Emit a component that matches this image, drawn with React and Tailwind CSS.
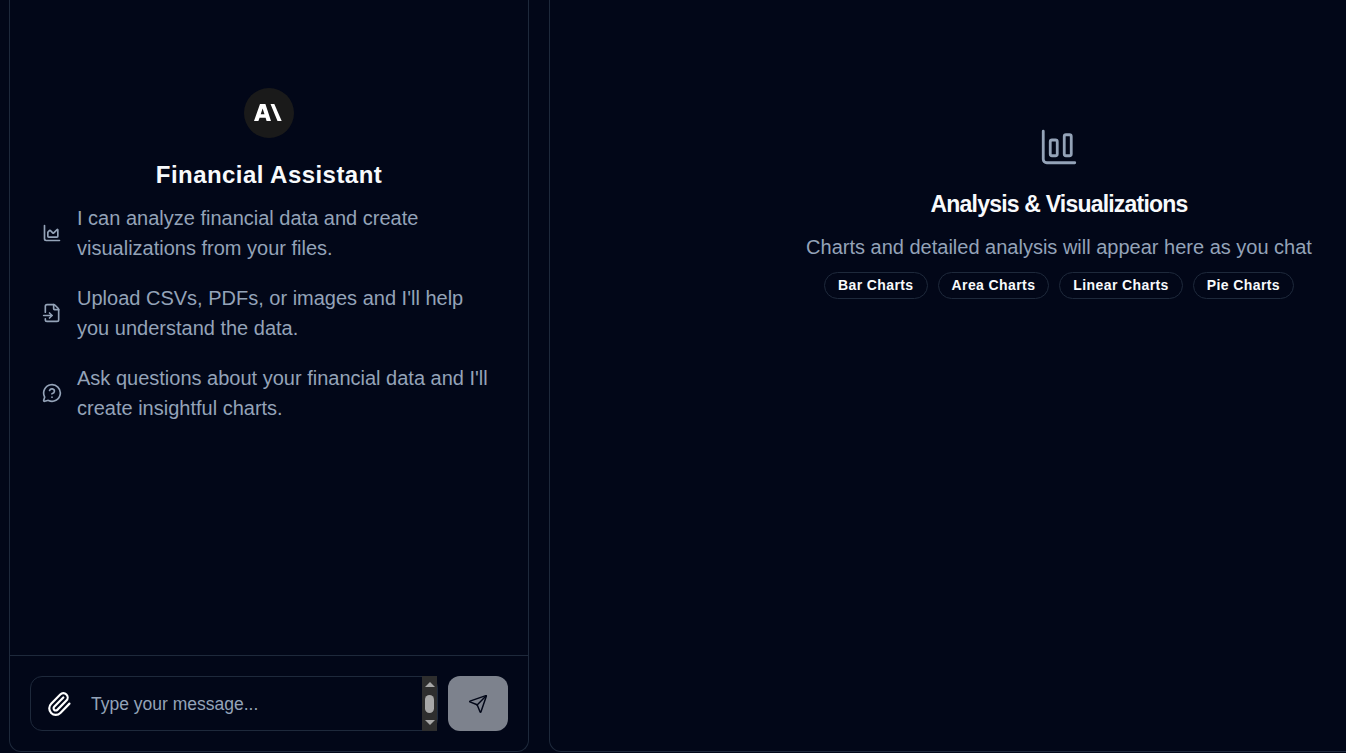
import React from 'react';
import { ChartArea, ChartColumnBig, FileInput, MessageCircleQuestion, Paperclip, Send } from 'lucide-react';

const TIPS = [
  { icon: ChartArea, text: 'I can analyze financial data and create visualizations from your files.' },
  { icon: FileInput, text: "Upload CSVs, PDFs, or images and I'll help you understand the data." },
  { icon: MessageCircleQuestion, text: "Ask questions about your financial data and I'll create insightful charts." },
];

const CHART_TYPES = ['Bar Charts', 'Area Charts', 'Linear Charts', 'Pie Charts'];

const ChatPanel = () => (
  <div className="w-[520px] shrink-0 flex flex-col border-x border-b border-[#1e293b] rounded-b-xl">
    <div className="flex-1 flex flex-col items-center pt-[88px] px-[31px]">
      <div className="w-[50px] h-[50px] rounded-full bg-[#1a1a1a] flex items-center justify-center">
        <svg width="30" height="22" viewBox="0 0 30 22" fill="#ffffff">
          <path d="M6 2h5.4l5.6 17h-4.4l-1-3.3H5.6L4.4 19H0zM6.7 12.2h3.8L8.6 6.4z" fillRule="evenodd" />
          <path d="M16.5 2h3.8l7.4 17h-4.2z" />
        </svg>
      </div>
      <h2 className="mt-[22px] text-[24px] leading-[30px] font-bold tracking-[0.45px] text-[#f8fafc]">Financial Assistant</h2>
      <div className="w-full mt-[13px] flex flex-col gap-[20px]">
        {TIPS.map(({ icon: Icon, text }) => (
          <div key={text} className="flex items-center gap-[15px]">
            <Icon className="ml-[1px] w-[20px] h-[20px] shrink-0 text-[#94a3b8]" strokeWidth={2} />
            <p className="text-[20px] leading-[30px] text-[#94a3b8]">{text}</p>
          </div>
        ))}
      </div>
    </div>
    <div className="border-t border-[#1e293b] p-[20px] flex items-center gap-[10px]">
      <div className="flex-1 h-[55px] flex items-center border border-[#1e293b] rounded-xl">
        <Paperclip className="ml-[15px] w-[26px] h-[26px] shrink-0 text-white" strokeWidth={2} />
        <textarea
          rows={1}
          placeholder="Type your message..."
          className="ml-[19px] flex-1 min-w-0 bg-transparent text-[17.5px] leading-[28px] resize-none outline-none text-[#f8fafc] placeholder:text-[#94a3b8]"
        />
        <div className="w-[15px] h-[55px] shrink-0 bg-[#2e2e2e] flex flex-col items-center justify-between py-[6px]">
          <div className="w-0 h-0 border-x-[5px] border-x-transparent border-b-[5px] border-b-[#a8a8a8]" />
          <div className="w-[9px] h-[18px] rounded-full bg-[#a8a8a8]" />
          <div className="w-0 h-0 border-x-[5px] border-x-transparent border-t-[5px] border-t-[#a8a8a8]" />
        </div>
      </div>
      <button type="button" className="w-[60px] h-[55px] shrink-0 rounded-xl bg-[#7d828d] flex items-center justify-center">
        <Send className="w-[20px] h-[20px] text-[#020718]" strokeWidth={1.75} />
      </button>
    </div>
  </div>
);

// panel runs past the right edge of the window, so its content is centred off to the right
const AnalysisPanel = () => (
  <div className="w-[1020px] shrink-0 flex flex-col items-center pt-[126px] border-x border-b border-[#1e293b] rounded-b-xl">
    <ChartColumnBig className="w-[42px] h-[42px] text-[#94a3b8]" strokeWidth={1.6} />
    <h2 className="mt-[20px] text-[23px] leading-[32px] font-bold tracking-[-0.8px] text-[#f8fafc]">Analysis &amp; Visualizations</h2>
    <p className="mt-[13px] text-[20px] leading-[28px] text-[#94a3b8]">Charts and detailed analysis will appear here as you chat</p>
    <div className="mt-[11px] flex gap-[10px]">
      {CHART_TYPES.map((t) => (
        <span key={t} className="h-[27px] px-[13px] flex items-center rounded-full border border-[#1e293b] text-[14px] font-bold tracking-[0.4px] text-[#f8fafc]">
          {t}
        </span>
      ))}
    </div>
  </div>
);

export default function App() {
  return (
    <div className="h-[753px] overflow-hidden bg-[#020718] pl-[9px] pb-[1px] flex gap-[20px] font-['Liberation_Sans',Arial,sans-serif]">
      <ChatPanel />
      <AnalysisPanel />
    </div>
  );
}
